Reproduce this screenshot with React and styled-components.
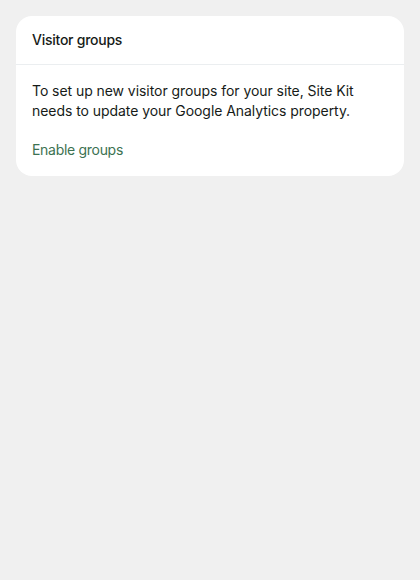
import React from 'react';
import styled, { createGlobalStyle } from 'styled-components';

const GlobalStyle = createGlobalStyle`
  html, body {
    margin: 0;
    padding: 0;
    background: #f0f0f0;
    font-family: Inter, "Noto Sans", sans-serif;
    -webkit-font-smoothing: antialiased;
  }
`;

const Page = styled.div`
  padding: 16px;
`;

const Card = styled.div`
  background: #ffffff;
  border-radius: 16px;
  overflow: hidden;
`;

const CardHeader = styled.div`
  height: 48px;
  padding: 0 16px;
  display: flex;
  align-items: center;
  border-bottom: 1px solid #ebeef0;
`;

const Title = styled.h3`
  margin: 0;
  font-size: 14px;
  font-weight: 500;
  line-height: 20px;
  color: #161b18;
  letter-spacing: -0.25px;
`;

const CardBody = styled.div`
  padding: 16px;
  display: flex;
  flex-direction: column;
  align-items: flex-start;
  gap: 19px;
`;

const Text = styled.p`
  margin: 0;
  font-size: 14px;
  line-height: 20px;
  color: #161b18;
  letter-spacing: -0.06px;
`;

const LinkButton = styled.a`
  font-size: 14px;
  line-height: 20px;
  color: #3c7251;
  text-decoration: none;
  cursor: pointer;
  letter-spacing: -0.3px;
`;

export default function App() {
  return (
    <>
      <GlobalStyle />
      <Page>
        <Card>
          <CardHeader>
            <Title>Visitor groups</Title>
          </CardHeader>
          <CardBody>
            <Text>
              To set up new visitor groups for your site, Site Kit needs to update
              your Google Analytics property.
            </Text>
            <LinkButton>Enable groups</LinkButton>
          </CardBody>
        </Card>
      </Page>
    </>
  );
}
